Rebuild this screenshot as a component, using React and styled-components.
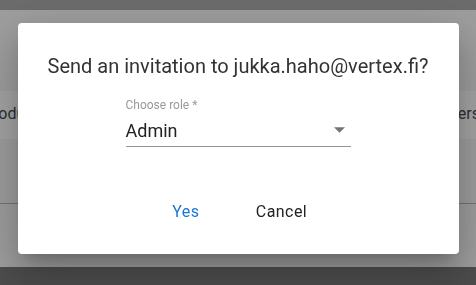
import React from "react";
import styled, { createGlobalStyle } from "styled-components";

const GlobalStyle = createGlobalStyle`
  html, body { margin: 0; padding: 0; height: 100%; }
  body { font-family: Roboto, "Noto Sans", Arial, sans-serif; }
  #root { height: 100%; }
`;

const Page = styled.div`
  height: 100vh;
  display: flex;
  flex-direction: column;
  background: #f2f2f2;
  overflow: hidden;
`;

const AppBar = styled.div`
  height: 10px;
  flex: none;
  background: #a6a6a6;
`;

const Content = styled.div`
  flex: 1;
  padding-top: 81px;
  display: flex;
  flex-direction: column;
`;

const TabBar = styled.div`
  height: 48px;
  background: #fbfbfb;
  display: flex;
  justify-content: space-between;
  align-items: center;
  margin: 0 -4px 0 -17px;
  padding-bottom: 3px;
  box-sizing: border-box;
`;

const Tab = styled.span`
  font-size: 16px;
  color: #484848;
`;

const TableRow = styled.div`
  height: 64px;
  border-bottom: 1px solid #b0b0b0;
  background: #f2f2f2;
`;

const Footer = styled.div`
  height: 18px;
  flex: none;
  background: #767676;
`;

const Backdrop = styled.div`
  position: fixed;
  inset: 0;
  background: rgba(0, 0, 0, 0.35);
  display: flex;
  justify-content: center;
  align-items: flex-start;
  padding-top: 23px;
`;

const Dialog = styled.div`
  width: 441px;
  box-sizing: border-box;
  background: #fff;
  border-radius: 4px;
  box-shadow: 0px 11px 15px -7px rgba(0, 0, 0, 0.2),
    0px 24px 38px 3px rgba(0, 0, 0, 0.14),
    0px 9px 46px 8px rgba(0, 0, 0, 0.12);
  display: flex;
  flex-direction: column;
  align-items: center;
  padding: 31px 0 24px;
`;

const Title = styled.h2`
  margin: 0;
  font-size: 20px;
  line-height: 24px;
  font-weight: 400;
  color: #333;
`;

const Field = styled.div`
  width: 225px;
  margin-top: 21px;
  display: flex;
  flex-direction: column;
`;

const Label = styled.label`
  font-size: 12px;
  line-height: 12px;
  color: #9a9a9a;
`;

const SelectBox = styled.div`
  margin-top: 8px;
  padding-bottom: 3px;
  border-bottom: 1px solid rgba(0, 0, 0, 0.42);
  display: flex;
  justify-content: space-between;
  align-items: flex-start;
`;

const Value = styled.span`
  font-size: 18px;
  line-height: 24px;
  color: #222;
`;

const Arrow = styled.svg`
  width: 11px;
  height: 6px;
  margin: 8px 6px 0 0;
  fill: #757575;
`;

const Actions = styled.div`
  margin-top: 47px;
  display: flex;
  gap: 30px;
  padding-right: 7px;
`;

const Button = styled.button`
  min-width: 64px;
  padding: 6px 8px;
  border: none;
  background: transparent;
  font-family: Roboto, "Noto Sans", Arial, sans-serif;
  font-size: 16px;
  line-height: 24px;
  letter-spacing: 0.02857em;
  color: ${(p) => (p.$primary ? "#1976d2" : "#222")};
  cursor: pointer;
`;

export default function App() {
  return (
    <>
      <GlobalStyle />
      <Page>
        <AppBar />
        <Content>
          <TabBar>
            <Tab>Products</Tab>
            <Tab>Users</Tab>
          </TabBar>
          <TableRow />
        </Content>
        <Footer />
      </Page>
      <Backdrop>
        <Dialog role="dialog">
          <Title>Send an invitation to jukka.haho@vertex.fi?</Title>
          <Field>
            <Label>Choose role *</Label>
            <SelectBox>
              <Value>Admin</Value>
              <Arrow viewBox="0 0 10 5">
                <path d="M0 0l5 5 5-5z" />
              </Arrow>
            </SelectBox>
          </Field>
          <Actions>
            <Button $primary>Yes</Button>
            <Button>Cancel</Button>
          </Actions>
        </Dialog>
      </Backdrop>
    </>
  );
}
